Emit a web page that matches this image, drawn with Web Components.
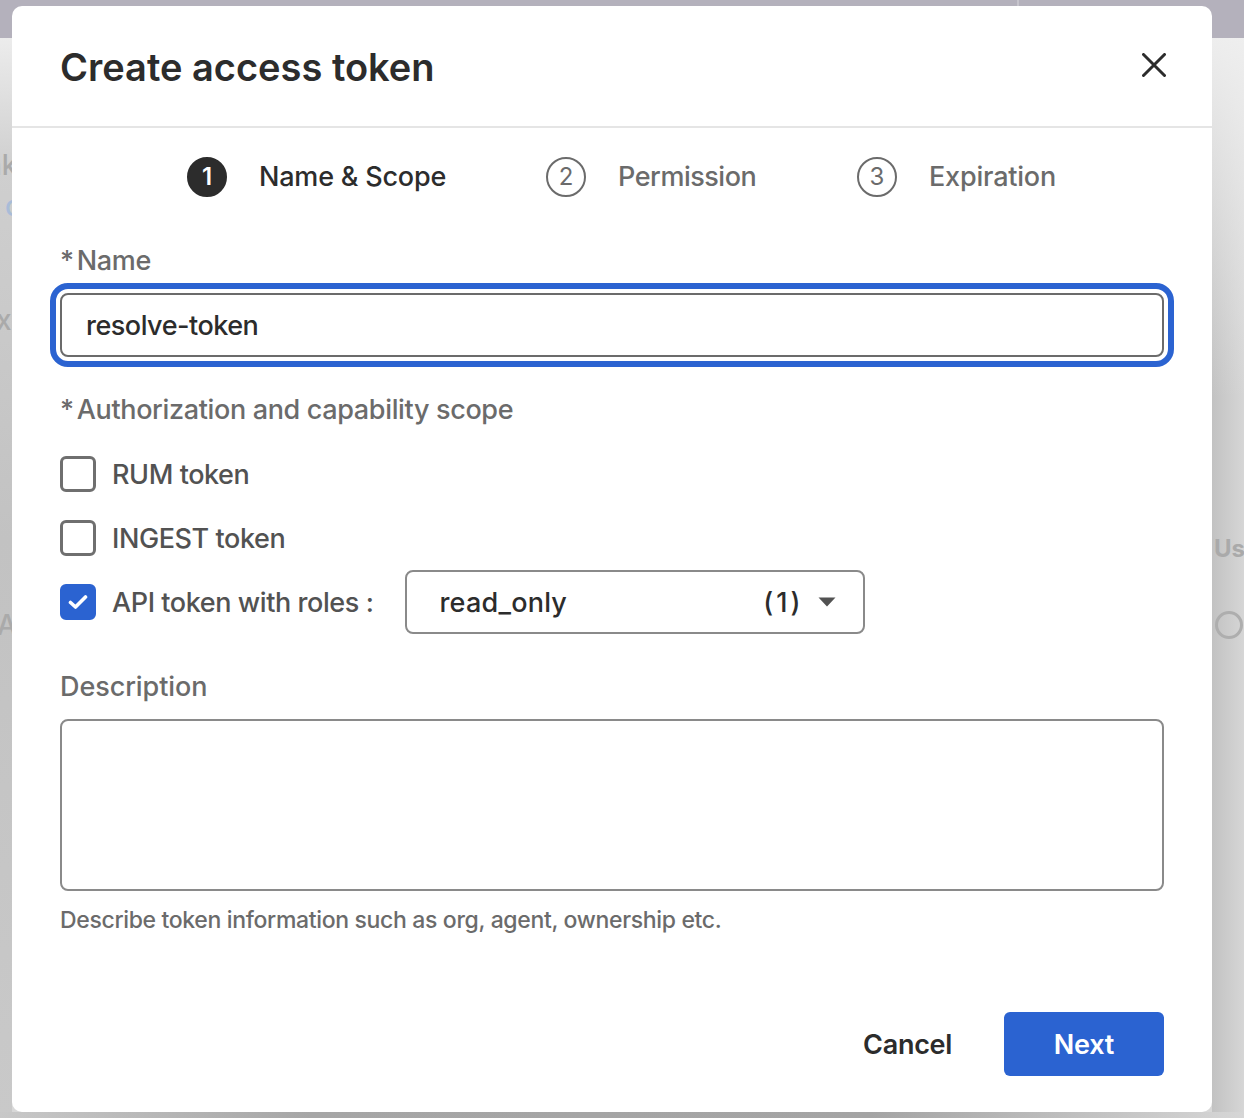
<!DOCTYPE html>
<html>
<head>
<meta charset="utf-8">
<title>Create access token</title>
<style>
  html, body { margin: 0; height: 100%; }
  body { width: 1244px; height: 1118px; overflow: hidden; font-family: Inter, "Liberation Sans", sans-serif; }
</style>
</head>
<body>
<token-page>
  <token-dialog heading="Create access token">
    <token-steps>
      <token-step num="1" active style="width:359px">Name &amp; Scope</token-step>
      <token-step num="2" style="width:311px;letter-spacing:-0.47px">Permission</token-step>
      <token-step num="3">Expiration</token-step>
    </token-steps>
    <token-form></token-form>
    <token-btn slot="footer" kind="link">Cancel</token-btn>
    <token-btn slot="footer" kind="primary">Next</token-btn>
  </token-dialog>
</token-page>

<script>
const FONT = 'Inter, "Liberation Sans", sans-serif';

class TokenPage extends HTMLElement {
  constructor() {
    super();
    this.attachShadow({mode: 'open'});
    this.shadowRoot.innerHTML = `
    <style>
      :host { display: block; position: relative; width: 1244px; height: 1118px; overflow: hidden;
        background: #d8d8d8; font-family: ${FONT}; }
      .band { height: 38px; background: #b4b1bc; }
      .band i { position: absolute; top: 0; left: 1017px; width: 2px; height: 6px; background: #c6c4cc; }
      .wrap { position: absolute; inset: 0; padding: 6px 32px 6px 12px; display: flex; }
      .ghost { position: absolute; color: #aaa; font-size: 28px; line-height: 32px; font-weight: 500; }
      .ring { position: absolute; left: 1215px; top: 611px; width: 22px; height: 22px;
        border: 3px solid #aeaeae; border-radius: 50%; }
      .edge { position: absolute; left: 1212px; top: 38px; width: 32px; height: 1080px;
        background: linear-gradient(180deg, rgba(240,240,240,.95) 0, rgba(240,240,240,0) 360px),
          linear-gradient(90deg, #c2c2c2 0%, #d6d6d6 100%); }
      .edge2 { position: absolute; left: 0; top: 38px; width: 12px; height: 1080px;
        background: linear-gradient(180deg, #ececec 0, #cfcfcf 130px, #c2c2c2 500px, #c9c9c9 1080px); }
      .bottom { position: absolute; left: 0; top: 1112px; width: 1244px; height: 6px;
        background: linear-gradient(90deg, #c8c8c8 0%, #a6a6a6 25%, #a4a4a4 70%, #d6d6d6 100%); }
    </style>
    <div class="band"><i></i></div>
    <div class="edge"></div>
    <div class="edge2"></div>
    <div class="bottom"></div>
    <span class="ghost" style="left:-15px;top:149px">nk</span>
    <span class="ghost" style="left:5px;top:190px;color:#a9bcd8">c</span>
    <span class="ghost" style="left:-4px;top:304px">x)</span>
    <span class="ghost" style="left:-3px;top:609px">Av</span>
    <span class="ghost" style="left:1214px;top:533px;font-weight:700;font-size:24px">Us</span>
    <span class="ring"></span>
    <div class="wrap"><slot></slot></div>`;
  }
}

class TokenDialog extends HTMLElement {
  constructor() {
    super();
    this.attachShadow({mode: 'open'});
    this.shadowRoot.innerHTML = `
    <style>
      :host { display: flex; flex-direction: column; width: 1200px; height: 1106px; box-sizing: border-box;
        background: #fff; border-radius: 10px; }
      header { height: 120px; box-sizing: content-box; border-bottom: 2px solid #e5e5e5;
        display: flex; align-items: center; justify-content: space-between; padding: 0 46px 0 48px; }
      h1 { margin: 0; font-size: 38px; line-height: 46px; font-weight: 600; color: #2c2c2c; position: relative; top: 1px; }
      svg { display: block; position: relative; top: -1px; }
      main { flex: 1; padding: 0 48px; }
      footer { display: flex; justify-content: flex-end; align-items: center; gap: 52px; padding: 0 48px 36px; }
    </style>
    <header>
      <h1></h1>
      <svg width="24" height="24" viewBox="0 0 24 24"><path d="M1.5 1.5 L22.5 22.5 M22.5 1.5 L1.5 22.5" stroke="#2c2c2c" stroke-width="3" stroke-linecap="round" fill="none"/></svg>
    </header>
    <main><slot></slot></main>
    <footer><slot name="footer"></slot></footer>`;
    this.shadowRoot.querySelector('h1').textContent = this.getAttribute('heading');
  }
}

class TokenSteps extends HTMLElement {
  constructor() {
    super();
    this.attachShadow({mode: 'open'});
    this.shadowRoot.innerHTML = `
    <style>
      :host { display: flex; padding: 29px 0 0 127px; height: 40px; }
    </style>
    <slot></slot>`;
  }
}

class TokenStep extends HTMLElement {
  constructor() {
    super();
    this.attachShadow({mode: 'open'});
    this.shadowRoot.innerHTML = `
    <style>
      :host { display: flex; align-items: center; gap: 32px; font-size: 27px; letter-spacing: -0.2px; font-weight: 450; line-height: 40px; color: #6b6b6b; flex: none; white-space: nowrap; }
      :host([active]) { color: #2c2c2c; }
      b { width: 36px; height: 36px; border: 2px solid #6b6b6b; border-radius: 50%; display: flex; align-items: center; justify-content: center;
        font-size: 24px; font-weight: 400; flex: none; letter-spacing: 0; }
      :host([active]) b { background: #2c2c2c; border-color: #2c2c2c; color: #fff; font-weight: 600; }
    </style>
    <b></b><span><slot></slot></span>`;
    this.shadowRoot.querySelector('b').textContent = this.getAttribute('num');
  }
}

class TokenCheck extends HTMLElement {
  constructor() {
    super();
    this.attachShadow({mode: 'open'});
    this.shadowRoot.innerHTML = `
    <style>
      :host { display: flex; align-items: center; gap: 16px; height: 36px; font-size: 27px; letter-spacing: -0.42px; font-weight: 450; color: #525252; white-space: nowrap; }
      i { width: 36px; height: 36px; box-sizing: border-box; border: 3.5px solid #6f6f6f; border-radius: 6px; display: flex; align-items: center; justify-content: center; flex: none; }
      :host([checked]) i { background: #2b63d1; border-color: #2b63d1; }
      svg { display: none; }
      :host([checked]) svg { display: block; }
    </style>
    <i><svg width="20" height="16" viewBox="0 0 20 16"><path d="M2.5 8.5 L7.5 13 L17.5 3" stroke="#fff" stroke-width="3.6" stroke-linecap="round" stroke-linejoin="round" fill="none"/></svg></i>
    <span><slot></slot></span>`;
  }
}

class TokenSelect extends HTMLElement {
  constructor() {
    super();
    this.attachShadow({mode: 'open'});
    this.shadowRoot.innerHTML = `
    <style>
      :host { display: flex; align-items: center; width: 460px; height: 64px; box-sizing: border-box; border: 2px solid #8a8a8a; border-radius: 8px;
        padding: 0 27px 0 32px; font-size: 27px; letter-spacing: 0.2px; font-weight: 450; color: #2c2c2c; }
      span { flex: 1; }
      em { font-style: normal; margin-right: 15px; letter-spacing: 3px; }
      svg { display: block; }
    </style>
    <span>read_only</span><em>(1)</em>
    <svg width="18" height="10" viewBox="0 0 18 10"><path d="M0.5 0.5 H17.5 L9 9.5 Z" fill="#525252"/></svg>`;
  }
}

class TokenForm extends HTMLElement {
  constructor() {
    super();
    this.attachShadow({mode: 'open'});
    this.shadowRoot.innerHTML = `
    <style>
      :host { display: block; font-size: 27px; letter-spacing: -0.35px; font-weight: 450; color: #6b6b6b; }
      .label { display: block; line-height: 34px; color: #6b6b6b; }
      .label s { text-decoration: none; margin-right: 3px; }
      .input { position: relative; margin-top: 15px; height: 64px; box-sizing: border-box; border: 2px solid #6b6b6b; border-radius: 8px;
        display: flex; align-items: center; padding: 0 24px; color: #2c2c2c; letter-spacing: -0.5px; }
      .input::after { content: ""; position: absolute; inset: -12px; border: 6px solid #2b63d1; border-radius: 18px; }
      .opts { display: flex; flex-direction: column; gap: 28px; margin-top: 29px; }
      .api { height: 36px; display: flex; align-items: center; gap: 32px; }
      .area { margin-top: 15px; height: 172px; box-sizing: border-box; border: 2px solid #8a8a8a; border-radius: 8px; }
      .hint { margin-top: 13px; font-size: 23px; line-height: 32px; color: #6b6b6b; letter-spacing: -0.34px; }
    </style>
    <label class="label" style="margin-top:47px"><s>*</s>Name</label>
    <div class="input">resolve-token</div>
    <label class="label" style="margin-top:36px"><s>*</s>Authorization and capability scope</label>
    <div class="opts">
      <token-check>RUM token</token-check>
      <token-check>INGEST token</token-check>
      <div class="api"><token-check checked>API token with roles :</token-check><token-select></token-select></div>
    </div>
    <label class="label" style="margin-top:50px;letter-spacing:-0.08px">Description</label>
    <div class="area"></div>
    <div class="hint">Describe token information such as org, agent, ownership etc.</div>`;
  }
}

class TokenBtn extends HTMLElement {
  constructor() {
    super();
    this.attachShadow({mode: 'open'});
    this.shadowRoot.innerHTML = `
    <style>
      :host { display: flex; align-items: center; justify-content: center; height: 63px; padding-top: 1px; font-size: 27px; letter-spacing: -0.3px; font-weight: 600; color: #2c2c2c; border-radius: 6px; }
      :host([kind="primary"]) { width: 160px; background: #2b63d1; color: #fff; letter-spacing: -0.2px; }
    </style>
    <slot></slot>`;
  }
}

customElements.define('token-page', TokenPage);
customElements.define('token-dialog', TokenDialog);
customElements.define('token-steps', TokenSteps);
customElements.define('token-step', TokenStep);
customElements.define('token-check', TokenCheck);
customElements.define('token-select', TokenSelect);
customElements.define('token-form', TokenForm);
customElements.define('token-btn', TokenBtn);
</script>
</body>
</html>
